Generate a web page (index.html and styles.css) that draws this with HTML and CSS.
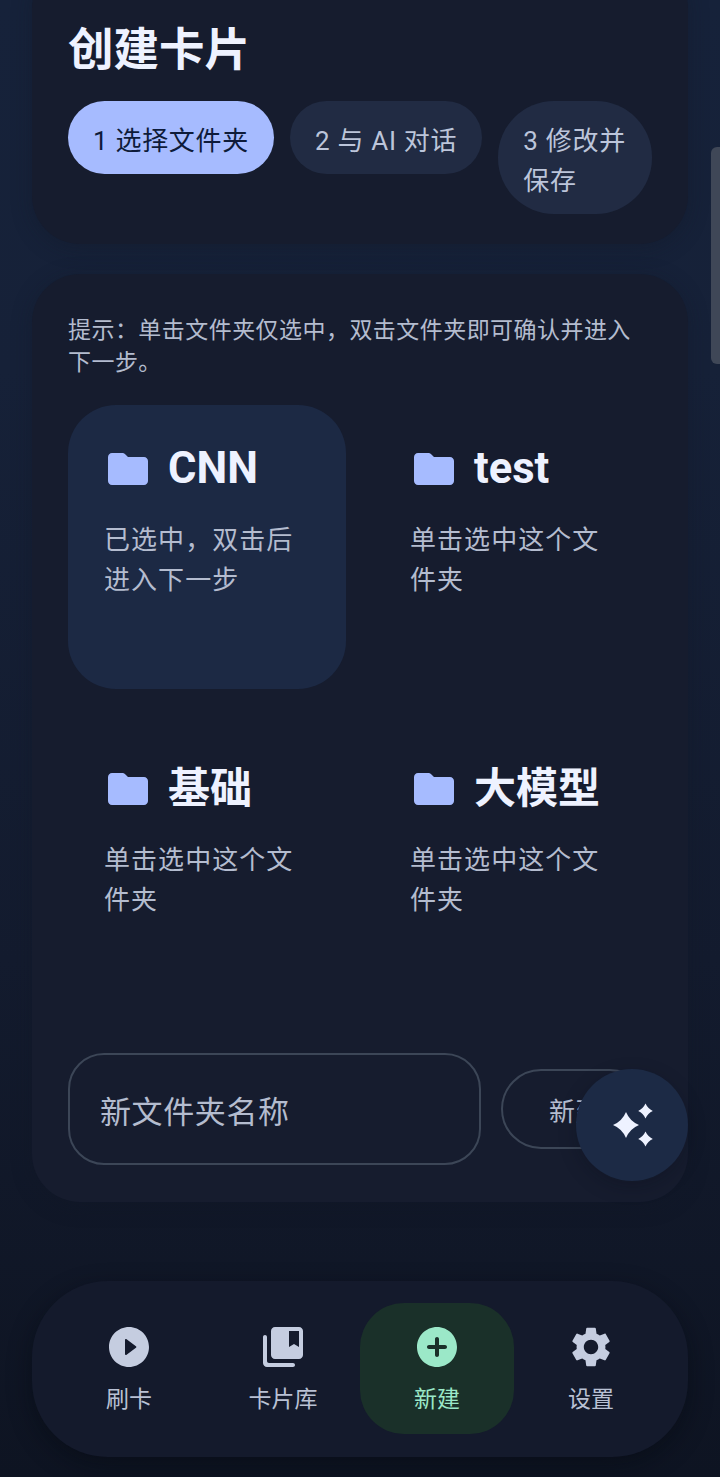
FILE: index.html
```html
<!DOCTYPE html>
<html lang="zh-CN">
<head>
    <meta charset="UTF-8">
    <meta name="viewport" content="width=device-width, initial-scale=1.0">
    <title>创建卡片</title>
    <link rel="stylesheet" href="styles.css">
</head>
<body>
    <div class="page">
        <section class="card card-head">
            <h1>创建卡片</h1>
            <div class="steps">
                <div class="step active">1 选择文件夹</div>
                <div class="step">2 与 AI 对话</div>
                <div class="step step-wrap">3 修改并保存</div>
            </div>
        </section>

        <section class="card card-main">
            <p class="tip">提示：单击文件夹仅选中，双击文件夹即可确认并进入下一步。</p>

            <div class="folders">
                <div class="folder selected">
                    <div class="folder-title">
                        <svg class="icon" viewBox="0 0 24 24"><path d="M10.59 4.59C10.21 4.21 9.7 4 9.17 4H4c-1.1 0-1.99.9-1.99 2L2 18c0 1.1.9 2 2 2h16c1.1 0 2-.9 2-2V8c0-1.1-.9-2-2-2h-8l-1.41-1.41z"/></svg>
                        <span class="latin">CNN</span>
                    </div>
                    <p>已选中，双击后进入下一步</p>
                </div>
                <div class="folder">
                    <div class="folder-title">
                        <svg class="icon" viewBox="0 0 24 24"><path d="M10.59 4.59C10.21 4.21 9.7 4 9.17 4H4c-1.1 0-1.99.9-1.99 2L2 18c0 1.1.9 2 2 2h16c1.1 0 2-.9 2-2V8c0-1.1-.9-2-2-2h-8l-1.41-1.41z"/></svg>
                        <span class="latin">test</span>
                    </div>
                    <p>单击选中这个文件夹</p>
                </div>
                <div class="folder">
                    <div class="folder-title">
                        <svg class="icon" viewBox="0 0 24 24"><path d="M10.59 4.59C10.21 4.21 9.7 4 9.17 4H4c-1.1 0-1.99.9-1.99 2L2 18c0 1.1.9 2 2 2h16c1.1 0 2-.9 2-2V8c0-1.1-.9-2-2-2h-8l-1.41-1.41z"/></svg>
                        <span>基础</span>
                    </div>
                    <p>单击选中这个文件夹</p>
                </div>
                <div class="folder">
                    <div class="folder-title">
                        <svg class="icon" viewBox="0 0 24 24"><path d="M10.59 4.59C10.21 4.21 9.7 4 9.17 4H4c-1.1 0-1.99.9-1.99 2L2 18c0 1.1.9 2 2 2h16c1.1 0 2-.9 2-2V8c0-1.1-.9-2-2-2h-8l-1.41-1.41z"/></svg>
                        <span>大模型</span>
                    </div>
                    <p>单击选中这个文件夹</p>
                </div>
            </div>

            <div class="new-folder">
                <div class="name-input">新文件夹名称</div>
                <div class="new-btn">新建</div>
            </div>
        </section>
    </div>

    <div class="scrollbar"></div>

    <div class="fab">
        <svg class="icon" viewBox="0 0 24 24"><path d="M9 5.5Q10.9 10.1 15.5 12 10.9 13.9 9 18.5 7.1 13.9 2.5 12 7.1 10.1 9 5.5zM18.75 1.3Q19.9 3.8 22.4 5 19.9 6.2 18.75 8.7 17.6 6.2 15.1 5 17.6 3.8 18.75 1.3zM18.75 15.3Q19.9 17.8 22.4 19 19.9 20.2 18.75 22.7 17.6 20.2 15.1 19 17.6 17.8 18.75 15.3z"/></svg>
    </div>

    <nav class="bottom-nav">
        <div class="nav-item">
            <svg class="icon" viewBox="0 0 24 24"><path d="M12 2C6.48 2 2 6.48 2 12s4.48 10 10 10 10-4.48 10-10S17.52 2 12 2zm-2 13.5v-7c0-.41.47-.65.8-.4l4.67 3.5c.27.2.27.6 0 .8l-4.67 3.5c-.33.25-.8.01-.8-.4z"/></svg>
            <span>刷卡</span>
        </div>
        <div class="nav-item">
            <svg class="icon" viewBox="0 0 24 24"><path d="M3 6c-.55 0-1 .45-1 1v13c0 1.1.9 2 2 2h13c.55 0 1-.45 1-1s-.45-1-1-1H5c-.55 0-1-.45-1-1V7c0-.55-.45-1-1-1z"/><path d="M20 2H8c-1.1 0-2 .9-2 2v12c0 1.1.9 2 2 2h12c1.1 0 2-.9 2-2V4c0-1.1-.9-2-2-2zm0 10l-2.5-1.5L15 12V4h5v8z"/></svg>
            <span>卡片库</span>
        </div>
        <div class="nav-item active">
            <svg class="icon" viewBox="0 0 24 24"><path d="M12 2C6.48 2 2 6.48 2 12s4.48 10 10 10 10-4.48 10-10S17.52 2 12 2zm4 11h-3v3c0 .55-.45 1-1 1s-1-.45-1-1v-3H8c-.55 0-1-.45-1-1s.45-1 1-1h3V8c0-.55.45-1 1-1s1 .45 1 1v3h3c.55 0 1 .45 1 1s-.45 1-1 1z"/></svg>
            <span>新建</span>
        </div>
        <div class="nav-item">
            <svg class="icon" viewBox="0 0 24 24"><path d="M19.14 12.94c.04-.3.06-.61.06-.94 0-.32-.02-.64-.07-.94l2.03-1.58c.18-.14.23-.41.12-.61l-1.92-3.32c-.12-.22-.37-.29-.59-.22l-2.39.96c-.5-.38-1.03-.7-1.62-.94l-.36-2.54c-.04-.24-.24-.41-.48-.41h-3.84c-.24 0-.43.17-.47.41l-.36 2.54c-.59.24-1.13.57-1.62.94l-2.39-.96c-.22-.08-.47 0-.59.22L2.74 8.87c-.12.21-.08.47.12.61l2.03 1.58c-.05.3-.09.63-.09.94s.02.64.07.94l-2.03 1.58c-.18.14-.23.41-.12.61l1.92 3.32c.12.22.37.29.59.22l2.39-.96c.5.38 1.03.7 1.62.94l.36 2.54c.05.24.24.41.48.41h3.84c.24 0 .44-.17.47-.41l.36-2.54c.59-.24 1.13-.56 1.62-.94l2.39.96c.22.08.47 0 .59-.22l1.92-3.32c.12-.22.07-.47-.12-.61l-2.01-1.58zM12 15.6c-1.98 0-3.6-1.62-3.6-3.6s1.62-3.6 3.6-3.6 3.6 1.62 3.6 3.6-1.62 3.6-3.6 3.6z"/></svg>
            <span>设置</span>
        </div>
    </nav>
</body>
</html>
```

FILE: styles.css
```css
* {
    margin: 0;
    padding: 0;
    box-sizing: border-box;
}

html, body {
    height: 100%;
    overflow: hidden;
}

body {
    position: relative;
    background: linear-gradient(180deg, #16223a 0%, #162138 25%, #131b2e 65%, #0e1422 100%);
    font-family: Roboto, "Noto Sans CJK SC", sans-serif;
    color: #e8eeff;
}

.page {
    display: flex;
    flex-direction: column;
    gap: 30px;
    margin-top: -40px;
    padding: 0 32px;
}

.card {
    background-color: #161c2e;
    border-radius: 48px;
    box-shadow: 0 4px 20px rgba(16, 22, 38, 0.35);
}

.card-head {
    padding: 61px 36px 30px;
}

h1 {
    font-size: 45.5px;
    line-height: 60px;
    font-weight: 700;
    color: #eef2ff;
}

.steps {
    display: flex;
    align-items: flex-start;
    gap: 16px;
    margin-top: 20px;
}

.step {
    flex: none;
    padding: 20px 25px 13px;
    border-radius: 56px;
    background-color: #212b43;
    color: #bcc5da;
    font-size: 26px;
    line-height: 40px;
    letter-spacing: 0.7px;
    white-space: nowrap;
}

.step.active {
    background-color: #a6bbff;
    color: #0e1b3a;
}

.step-wrap {
    flex: 1 1 0;
    min-width: 0;
    padding-right: 20px;
    white-space: normal;
}

.card-main {
    padding: 41px 36px 37px;
}

.tip {
    font-size: 23px;
    line-height: 32px;
    letter-spacing: 0.45px;
    color: #b4bccf;
}

.folders {
    display: grid;
    grid-template-columns: repeat(2, 278px);
    gap: 36px 28px;
    margin-top: 26px;
}

.folder {
    height: 284px;
    padding: 40px 36px 0;
    border-radius: 48px;
}

.folder.selected {
    background-color: #1c2944;
}

.folder-title {
    display: flex;
    align-items: center;
    gap: 16px;
    font-size: 42px;
    line-height: 48px;
    font-weight: 700;
    color: #eef2ff;
}

.folder-title .latin {
    font-size: 43.5px;
}

.folder .icon {
    fill: #a6bbff;
}

.folder p {
    margin-top: 27px;
    font-size: 26px;
    line-height: 40px;
    letter-spacing: 1.05px;
    color: #b4bccf;
}

.icon {
    flex: none;
    display: block;
    width: 48px;
    height: 48px;
}

.new-folder {
    display: flex;
    align-items: center;
    gap: 20px;
    margin-top: 44px;
}

.name-input {
    width: 413px;
    height: 112px;
    padding: 8px 30px 0;
    border: 2px solid #3c4657;
    border-radius: 36px;
    font-size: 31px;
    line-height: 100px;
    letter-spacing: 0.6px;
    color: #b4bccf;
}

.new-btn {
    flex: none;
    height: 80px;
    padding: 7px 46px 0;
    border: 2px solid #3c4657;
    border-radius: 40px;
    font-size: 26px;
    line-height: 69px;
    letter-spacing: 0.6px;
    color: #b4bccf;
}

.scrollbar {
    position: absolute;
    top: 147px;
    right: 0;
    width: 9px;
    height: 217px;
    border-radius: 6px 0 0 6px;
    background-color: #3f4757;
}

.fab {
    position: absolute;
    left: 576px;
    top: 1069px;
    display: flex;
    align-items: center;
    justify-content: center;
    width: 112px;
    height: 112px;
    border-radius: 50%;
    background-color: #1c2a45;
    box-shadow: 0 6px 18px rgba(8, 12, 22, 0.25);
}

.fab .icon {
    fill: #eef2ff;
}

.bottom-nav {
    position: absolute;
    left: 32px;
    right: 32px;
    bottom: 20px;
    display: grid;
    grid-template-columns: repeat(4, 154px);
    height: 176px;
    padding: 22px 20px 23px;
    border-radius: 76px;
    background-color: #141a2c;
    box-shadow: 0 8px 24px rgba(5, 8, 16, 0.45);
}

.nav-item {
    display: flex;
    flex-direction: column;
    align-items: center;
    padding-top: 20px;
    border-radius: 44px;
    font-size: 23px;
    line-height: 32px;
    color: #b9c1d4;
}

.nav-item .icon {
    fill: #c5cde0;
    margin-bottom: 13px;
}

.nav-item.active {
    background-color: #1a3029;
    color: #9be8c8;
}

.nav-item.active .icon {
    fill: #9be8c8;
}
```
